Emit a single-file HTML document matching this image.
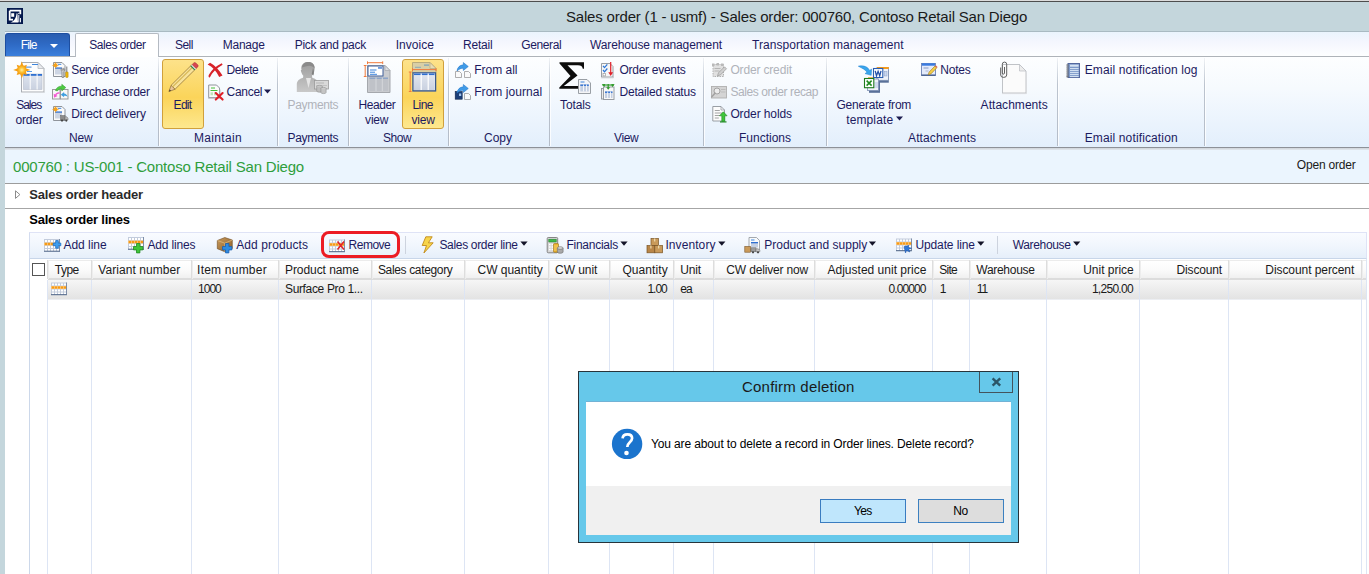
<!DOCTYPE html>
<html><head><meta charset="utf-8"><title>Sales order</title>
<style>
html,body{margin:0;padding:0}
body{width:1369px;height:574px;overflow:hidden;position:relative;background:#c4d6dc;font-family:"Liberation Sans",sans-serif;font-size:12px;line-height:14px}
div,span,svg{position:absolute;box-sizing:border-box}
.t{white-space:pre;font-size:12px;line-height:14px}
#texts,#dtexts{left:0;top:0;width:0;height:0}
#topline0{left:0;top:0;width:1369px;height:1px;background:#dcdcdc}
#topline1{left:0;top:1px;width:1369px;height:1px;background:#4e4e4e}
#titlebar{left:0;top:2px;width:1369px;height:30px;background:#c4d6dc}
#titleedge{left:5px;top:31px;width:1364px;height:1px;background:#a9bac2}
#tabrow{left:5px;top:32px;width:1364px;height:24px;background:linear-gradient(#eaf4fd,#f4f6fe 40%,#fdfeff)}
#tabline{left:5px;top:56px;width:1364px;height:1px;background:#aeb3b9}
#filetab{left:5px;top:33px;width:65px;height:23px;border-radius:3px 3px 0 0;border:1px solid #1d4ea0;border-bottom:none;background:linear-gradient(#2a5db0,#2f6bc6 50%,#3b7fdc)}
#filearrow{left:50px;top:44px;width:0;height:0;border-left:4px solid transparent;border-right:4px solid transparent;border-top:4px solid #fff}
#activetab{left:75px;top:33px;width:84px;height:24px;border:1px solid #b4bac2;border-bottom:none;border-radius:2px 2px 0 0;background:#fff}
#ribbon{left:5px;top:57px;width:1364px;height:90px;background:linear-gradient(#fdfeff,#f6fafe 35%,#eaf3fd 75%,#e3effc)}
#ribline1{left:5px;top:147px;width:1364px;height:1px;background:#8d9198}
#ribline2{left:5px;top:148px;width:1364px;height:2px;background:linear-gradient(#cfd3d9,#e2e8ef)}
#infobar{left:5px;top:150px;width:1364px;height:33px;background:#ebf5fe}
#infoline{left:5px;top:183px;width:1364px;height:1px;background:#9c9c9c}
#content{left:5px;top:184px;width:1364px;height:390px;background:#fff}
.gsep{top:58px;width:1px;height:88px;background:linear-gradient(rgba(190,198,210,.2),#bcc4cf 30%,#b4bcc8)}
.gsep2{top:58px;width:1px;height:88px;background:rgba(255,255,255,.8)}
.hl{border:1px solid #d0a03c;border-radius:3px;background:linear-gradient(#fde28a,#fbd763 45%,#fbd45a 55%,#fde88f)}
#hdrline{left:5px;top:208px;width:1364px;height:1px;background:#a6a6a6}
#toolbar{left:29px;top:232px;width:1338px;height:27px;border:1px solid #dfe3f6;border-bottom-color:#c8d6e9;border-left-color:#d3dcef;background:linear-gradient(#f9fbff,#f1f6fd 50%,#e6effa)}
.tsep{top:236px;width:1px;height:18px;background:#cdd3de}
#gridhdr{left:48px;top:260px;width:1318px;height:20px;background:linear-gradient(#ffffff,#fbfbfb 50%,#f0f0f0);border-bottom:2px solid #dcdcdc;border-top:1px solid #ececec}
#gridrow{left:48px;top:280px;width:1318px;height:20px;background:linear-gradient(#f6f6f6,#e3e3e3 95%,#eceef2 95%)}
.vl{top:280px;width:1px;height:294px;background:#dde5f4}
.vh{top:260px;width:2px;height:19px;background:linear-gradient(90deg,#dddddd 50%,#ededed 50%)}
#gridleft{left:29px;top:259px;width:1px;height:315px;background:#ccd8ea}
#gridright{left:1366px;top:259px;width:1px;height:315px;background:#dde5f4}
#chk{left:32px;top:263px;width:13px;height:13px;border:1px solid #555;background:#fff}
#remove{left:321px;top:231px;width:79px;height:27px;border:3px solid #ec1c24;border-radius:8px}
#dlg{left:578px;top:371px;width:441px;height:172px;background:#66c8ea;border:1px solid #27343b}
#dlgwhite{left:586px;top:402px;width:425px;height:84px;background:#fff}
#dlgedge{left:586px;top:401px;width:425px;height:1px;background:#72b2d5}
#dlggray{left:586px;top:486px;width:425px;height:49px;background:#f0f0f0}
#dlgclose{left:979px;top:372px;width:34px;height:21px;border:1px solid #44545c;border-top:none;background:#66c8ea}
.btn{top:499px;width:86px;height:24px;border:1px solid #3c80c0;background:#dddddd}
#yes{left:820px;border-color:#3a7cc0;background:#bfe6fc}
#no{left:918px}

</style></head>
<body>
<div id="topline0"></div><div id="topline1"></div>
<div id="titlebar"></div><div id="titleedge"></div>
<div id="tabrow"></div><div id="tabline"></div>
<div id="filetab"></div><div id="filearrow"></div>
<div id="activetab"></div>
<div id="ribbon"></div>
<div id="ribline1"></div><div id="ribline2"></div>
<div id="infobar"></div><div id="infoline"></div>
<div id="content"></div>
<div class="gsep" style="left:158px"></div><div class="gsep2" style="left:159px"></div><div class="gsep" style="left:277px"></div><div class="gsep2" style="left:278px"></div><div class="gsep" style="left:348px"></div><div class="gsep2" style="left:349px"></div><div class="gsep" style="left:448px"></div><div class="gsep2" style="left:449px"></div><div class="gsep" style="left:549px"></div><div class="gsep2" style="left:550px"></div><div class="gsep" style="left:703px"></div><div class="gsep2" style="left:704px"></div><div class="gsep" style="left:826px"></div><div class="gsep2" style="left:827px"></div><div class="gsep" style="left:1057px"></div><div class="gsep2" style="left:1058px"></div><div class="gsep" style="left:1204px"></div><div class="gsep2" style="left:1205px"></div>
<div class="hl" style="left:162px;top:59px;width:42px;height:70px"></div>
<div class="hl" style="left:402px;top:59px;width:42px;height:70px"></div>
<div id="hdrline"></div>
<div id="toolbar"></div>
<div id="gridhdr"></div>
<div id="gridrow"></div>
<div id="gridleft"></div><div id="gridright"></div>
<div class="vl" style="left:47px"></div><div class="vh" style="left:47px"></div><div class="vl" style="left:91px"></div><div class="vh" style="left:91px"></div><div class="vl" style="left:191px"></div><div class="vh" style="left:191px"></div><div class="vl" style="left:278px"></div><div class="vh" style="left:278px"></div><div class="vl" style="left:371px"></div><div class="vh" style="left:371px"></div><div class="vl" style="left:464px"></div><div class="vh" style="left:464px"></div><div class="vl" style="left:548px"></div><div class="vh" style="left:548px"></div><div class="vl" style="left:609px"></div><div class="vh" style="left:609px"></div><div class="vl" style="left:673px"></div><div class="vh" style="left:673px"></div><div class="vl" style="left:713px"></div><div class="vh" style="left:713px"></div><div class="vl" style="left:814px"></div><div class="vh" style="left:814px"></div><div class="vl" style="left:932px"></div><div class="vh" style="left:932px"></div><div class="vl" style="left:969px"></div><div class="vh" style="left:969px"></div><div class="vl" style="left:1046px"></div><div class="vh" style="left:1046px"></div><div class="vl" style="left:1139px"></div><div class="vh" style="left:1139px"></div><div class="vl" style="left:1228px"></div><div class="vh" style="left:1228px"></div><div class="vl" style="left:1361px"></div><div class="vh" style="left:1361px"></div>
<div id="chk"></div>
<div id="remove"></div>
<svg width="1369" height="20" viewBox="0 236 1369 20" style="left:0;top:236px"><path d="M520.4 241.5h7.2l-3.6 4.2z" fill="#141428"/><path d="M620.4 241.5h7.2l-3.6 4.2z" fill="#141428"/><path d="M718.2 241.5h7.2l-3.6 4.2z" fill="#141428"/><path d="M868.8 241.5h7.2l-3.6 4.2z" fill="#141428"/><path d="M977.2 241.5h7.2l-3.6 4.2z" fill="#141428"/><path d="M1073.1 241.5h7.2l-3.6 4.2z" fill="#141428"/></svg><div class="tsep" style="left:405px"></div><div class="tsep" style="left:997px"></div><svg id="ico" width="1369" height="574" viewBox="0 0 1369 574" style="left:0;top:0">
<defs>
<radialGradient id="sun"><stop offset="0" stop-color="#fff0a0"/><stop offset=".55" stop-color="#fdc030"/><stop offset="1" stop-color="#f59e14"/></radialGradient>
<linearGradient id="colg" x1="0" y1="0" x2="0" y2="1"><stop offset="0" stop-color="#dfe4ee"/><stop offset="1" stop-color="#c9d1e0"/></linearGradient>
<linearGradient id="blar" x1="0" y1="0" x2="1" y2="1"><stop offset="0" stop-color="#6fb6f0"/><stop offset="1" stop-color="#1f74c8"/></linearGradient>
<linearGradient id="pay" x1="0" y1="0" x2="0" y2="1"><stop offset="0" stop-color="#9c9c9c"/><stop offset="1" stop-color="#c9c9c9"/></linearGradient>
<linearGradient id="sig" x1="0" y1="0" x2="0" y2="1"><stop offset="0" stop-color="#3a3a3a"/><stop offset=".5" stop-color="#111"/><stop offset="1" stop-color="#000"/></linearGradient>
</defs>
<!-- app icon -->
<g>
<rect x="7" y="8" width="16" height="16" fill="#04194d"/>
<path d="M9.7 10.7h10.6v3.5M9.7 10.7v9h3.3" fill="none" stroke="#fff" stroke-width="1.8"/>
<rect x="11.2" y="13.2" width="3" height="3.6" fill="#fff"/>
<path d="M10 22.6c3.5-.8 6-4 6.6-9.4l.9.2c.1 4 .3 6.500.6 9.200z" fill="#fff"/>
<rect x="18.300" y="14.800" width="1" height="7.500" fill="#fff"/><rect x="20" y="18" width="1" height="4.300" fill="#e8ecf4"/>
<rect x="18.200" y="12.900" width="1" height="1" fill="#fff"/>
</g>
<!-- Sales order big icon -->
<g>
<path d="M21.500 62.500h16.500l6 6v23.500h-22.500z" fill="#fdfdfd" stroke="#a9adb3" stroke-width="1"/>
<path d="M21 92.500h23.500v-22" fill="none" stroke="#d5d8dc" stroke-width="1"/>
<path d="M38 62.500v6h6z" fill="#e9ebee" stroke="#b5b9bf" stroke-width=".8"/>
<rect x="23.500" y="74" width="18.500" height="15.500" fill="url(#colg)" stroke="#b7bfce" stroke-width=".6"/>
<rect x="23.500" y="74" width="18.500" height="1.800" fill="#2f6fd0"/>
<rect x="29.700" y="74" width="1" height="15.500" fill="#fff"/><rect x="36.600" y="74" width="1" height="15.500" fill="#fff"/>
<rect x="32" y="64" width="6" height="1" fill="#3f86dc"/><rect x="26" y="66.600" width="5.500" height="1" fill="#3f86dc"/><rect x="27" y="71" width="5" height="1" fill="#5a9be4"/>
<g transform="translate(21.800 69.900)">
<path d="M0.0 -8.6L1.6 -4.0L5.1 -5.1L4.0 -1.6L8.6 0.0L4.0 1.6L5.1 5.1L1.6 4.0L0.0 8.6L-1.6 4.0L-5.1 5.1L-4.0 1.6L-8.6 0.0L-4.0 -1.6L-5.1 -5.1L-1.6 -4.0z" fill="#f59e14"/><circle r="4.6" fill="url(#sun)"/>
</g>
</g>
<!-- Service order small icon -->
<g>
<path d="M53.500 62.500h8.500l3 3v11h-11.500z" fill="#fafafa" stroke="#8f949b"/>
<rect x="55" y="67.500" width="7" height="7" fill="#cdd5e3"/><rect x="55" y="67.500" width="7" height="1.200" fill="#2f6fd0"/>
<rect x="57.800" y="63.800" width="3.500" height="1" fill="#3f86dc"/>
<g transform="translate(55.500 65.300) scale(.46)"><path d="M0.0 -8.3L1.3 -3.1L4.5 -4.5L3.1 -1.3L8.3 0.0L3.1 1.3L4.5 4.5L1.3 3.1L0.0 8.3L-1.3 3.1L-4.5 4.5L-3.1 1.3L-8.3 0.0L-3.1 -1.3L-4.5 -4.5L-1.3 -3.1z" fill="#f5a21c"/></g>
<path d="M62.200 68.200c-1.500.6-1.500 2.500-.2 3.200v6h1.800v-6c1.300-.7 1.300-2.600-.2-3.200v2h-1.400z" fill="#e6e6e6" stroke="#6d6d6d" stroke-width=".7"/>
<rect x="66.300" y="66.500" width="1" height="6" fill="#777"/>
<rect x="65.700" y="72" width="2.400" height="5.400" rx=".6" fill="#f2b90c" stroke="#a87c00" stroke-width=".5"/>
</g>
<!-- Purchase order small icon -->
<g>
<rect x="52.500" y="89.500" width="7.500" height="9.500" fill="#f8f8f8" stroke="#9a9a9a"/>
<rect x="60.500" y="89.500" width="7.500" height="9.500" fill="#f8f8f8" stroke="#9a9a9a"/>
<path d="M55.500 90.500c.8-3 3.600-4.600 6.300-4.300v-1.900l4 3.300-4 3.300v-1.900c-1.800-.2-3.400.400-4.400 1.900z" fill="#4fcb43" stroke="#2f9a2a" stroke-width=".5"/>
<path d="M59.500 92.300c-2.200-.2-3.600.8-4.300 2.200l-1.500-.800.300 4 3.600-1.700-1.300-.7c.7-1.200 1.700-1.600 3.200-1.600z" fill="#f25ad2"/>
<path d="M67.600 96.800c-.4-2-1.800-3-3.500-3.200v-1.500l-3.300 2.600 3.300 2.600v-1.600c1.400 0 2.600.3 3.500 1.100z" fill="#3f9fe0"/>
</g>
<!-- Direct delivery small icon -->
<g>
<path d="M53.500 106.500h8.500l3 3v11h-11.500z" fill="#fafafa" stroke="#8f949b"/>
<rect x="55" y="111.500" width="7" height="7" fill="#cdd5e3"/><rect x="55" y="111.500" width="7" height="1.200" fill="#2f6fd0"/>
<rect x="57.800" y="107.800" width="3.500" height="1" fill="#3f86dc"/>
<g transform="translate(55.500 109.300) scale(.46)"><path d="M0.0 -8.3L1.3 -3.1L4.5 -4.5L3.1 -1.3L8.3 0.0L3.1 1.3L4.5 4.5L1.3 3.1L0.0 8.3L-1.3 3.1L-4.5 4.5L-3.1 1.3L-8.3 0.0L-3.1 -1.3L-4.5 -4.5L-1.3 -3.1z" fill="#f5a21c"/></g>
<rect x="60.500" y="115.500" width="4.500" height="4.500" fill="#8c8c8c" stroke="#666" stroke-width=".5"/>
<path d="M65 116.800h1.800l1.200 1.500v1.700h-3z" fill="#b9b9b9" stroke="#666" stroke-width=".5"/>
<circle cx="62" cy="120.600" r="1.100" fill="#444"/><circle cx="66.300" cy="120.600" r="1.100" fill="#444"/>
</g>
<!-- Edit pencil -->
<g>
<path d="M168.900 91.600l2.200-6.300 4 3.900z" fill="#e9c59a" stroke="#7a5c2a" stroke-width=".6"/>
<path d="M168.900 91.600l.8-2.200 1.400 1.400z" fill="#4a3a20"/>
<path d="M171.100 85.300l19.800-19.600 4 4-19.800 19.500z" fill="#f8e39c" stroke="#8a6a2a" stroke-width=".7"/>
<path d="M172.700 86.800l19.800-19.600" stroke="#d9b95a" stroke-width="1.200" fill="none"/>
<path d="M190.900 65.700l1.200-1.200 4 4-1.200 1.200z" fill="#f4f4f4" stroke="#8a8a8a" stroke-width=".4"/>
<path d="M190.300 66.300l.9-.9 4 4-.9.900z" fill="#2f8a4a"/>
<path d="M192.100 64.500l1.700-1.600c.7-.6 1.500-.5 2.100.1l1.800 1.800c.6.600.7 1.400.1 2.100l-1.700 1.600z" fill="#d8474f" stroke="#8d2a30" stroke-width=".4"/>
</g>
<!-- Delete X -->
<g fill="#d8232a">
<path d="M207.600 64.500c4.800 2.400 8.600 6.400 11.600 12.600l3.300-1.700c-3.400-5.600-7.600-9.800-12.400-12.600z"/>
<path d="M221.800 63.200c-5.600 2.500-10.300 6.400-12.900 11.600-.8 1.500-.3 2.800.9 2.600 2.400-5 6.800-9.300 12.800-12.700z"/>
</g>
<!-- Cancel icon -->
<g>
<path d="M208.700 85h7.800l3 3v9.700h-10.800z" fill="#fbfbfb" stroke="#8f949b"/>
<path d="M208.200 98.500h12v-9" fill="none" stroke="#c9ccd1"/>
<rect x="211" y="87.500" width="4" height="1" fill="#42c23a"/><rect x="210.500" y="90" width="7" height="1" fill="#42c23a"/><rect x="210.500" y="92.300" width="2.500" height="3" fill="#bfe6bb"/><rect x="214" y="92.300" width="2.500" height="3" fill="#bfe6bb"/>
<path d="M215.800 93l6.800 6.600M222.600 93l-6.800 6.600" stroke="#df1f27" stroke-width="2.100" stroke-linecap="round"/>
</g>
<path d="M264 89.500h7l-3.500 4z" fill="#1c1c50"/>
<!-- Payments (disabled) -->
<g>
<path d="M301.500 70c-1-5 2-8 6.500-8s7.500 3 6.500 8c-.3 2.500-1.300 4.500-2.500 5.800l.3 2c3 1 5.700 2.500 6.200 6v8.200h-21.700v-8.200c.5-3.500 3.200-5 6.200-6l.3-2c-1.200-1.300-2.200-3.300-2.500-5.800z" fill="url(#pay)"/>
<path d="M302 67.500c.5-3.500 3-5.500 6.500-5.500 3.800 0 6.200 2.500 6 6.500-1.500-2-4-3-6.500-2.500-2.500.5-4.500.8-6 1.500z" fill="#8a8a8a"/>
<path d="M313 68c1 2 1.300 5 .4 7.500l-1.700-1.500z" fill="#808080"/>
<path d="M306 78l2.500 10 2.500-10z" fill="#e5e5e5"/>
<rect x="314.500" y="80.500" width="14" height="8.500" fill="#d9d9d9" stroke="#9b9b9b" stroke-width=".8"/>
<rect x="316" y="82.500" width="8" height="1" fill="#b5b5b5"/><rect x="316" y="85" width="11" height="1" fill="#c2c2c2"/>
<ellipse cx="319.500" cy="86.500" rx="2.800" ry="1.200" fill="#cfcfcf" stroke="#8e8e8e" stroke-width=".6"/>
<path d="M316.700 86.500v4.500a2.800 1.200 0 0 0 5.600 0v-4.500" fill="#bdbdbd" stroke="#8e8e8e" stroke-width=".6"/>
<ellipse cx="323.500" cy="88.500" rx="2.600" ry="1.100" fill="#d5d5d5" stroke="#8e8e8e" stroke-width=".6"/>
<path d="M320.900 88.500v4a2.600 1.100 0 0 0 5.200 0v-4" fill="#c4c4c4" stroke="#8e8e8e" stroke-width=".6"/>
</g>
<!-- Header view -->
<g>
<path d="M367.500 65.500h17.500l5 5v22h-22.500z" fill="#c9cbcf" stroke="#a5a8ad"/>
<path d="M385 65.500v5h5z" fill="#dcdee1" stroke="#a5a8ad" stroke-width=".7"/>
<rect x="369.500" y="77.500" width="18.500" height="13.500" fill="#bfc2c8"/>
<rect x="369.500" y="77.500" width="18.500" height="1.500" fill="#8ea5c8"/>
<rect x="375.500" y="77.500" width="1" height="13.500" fill="#d5d7db"/><rect x="381.800" y="77.500" width="1" height="13.500" fill="#d5d7db"/>
<rect x="368" y="66" width="15" height="10" fill="#fff" stroke="#3f5f9a" stroke-width="1"/>
<rect x="378" y="67.300" width="4" height="1.300" fill="#2f6fd0"/>
<rect x="370" y="69.500" width="6.500" height="1" fill="#3f86dc"/><rect x="370" y="71.700" width="5" height="1" fill="#3f86dc"/><rect x="370" y="73.800" width="7" height="1" fill="#3f86dc"/>
<path d="M367.500 62.700h15.200M367.500 61.300v2.800M382.700 61.300v2.800M365.200 65.500v11M363.800 65.500h2.800M363.800 76.500h2.800" stroke="#f07a3c" stroke-width="1" fill="none"/>
</g>
<!-- Line view -->
<g>
<path d="M412.500 62.500h17.500l6 6v23h-23.500z" fill="#d9cfa6" stroke="#b9ab7c"/>
<path d="M430 62.500v6h6z" fill="#e6dcb6" stroke="#b9ab7c" stroke-width=".7"/>
<rect x="424" y="64.500" width="5" height="1.200" fill="#7aa0b8"/><rect x="415" y="66.800" width="6" height="1" fill="#8aa8b8"/>
<rect x="413" y="72.800" width="22.500" height="18" fill="#f3f6fb" stroke="#3b5a8c" stroke-width="1.200"/>
<rect x="414" y="73.500" width="20.500" height="1.800" fill="#2f6fd0"/>
<rect x="414" y="75.300" width="20.500" height="14.700" fill="url(#colg)"/>
<rect x="420.600" y="73.500" width="1.200" height="16.500" fill="#fff"/><rect x="427.600" y="73.500" width="1.200" height="16.500" fill="#fff"/>
<path d="M412.500 69.600h23.500M412.500 68.200v2.800M436 68.200v2.800M410.200 72v19.500M408.800 72h2.800M408.800 91.500h2.800" stroke="#f07a3c" stroke-width="1" fill="none"/>
</g>
</svg>
<svg id="ico2" width="1369" height="574" viewBox="0 0 1369 574" style="left:0;top:0">
<!-- From all -->
<g>
<path d="M455.500 71.500h4l2 2v4h-6z" fill="#fafafa" stroke="#9a9a9a" stroke-width=".8"/>
<path d="M464.500 71.500h4l2 2v4h-6z" fill="#fafafa" stroke="#9a9a9a" stroke-width=".8"/>
<path d="M457 71c.3-3.600 3-6 6.300-6.200v-2.300l5 4-5 4v-2.300c-2.300 0-4.300.900-6.300 2.800z" fill="#3f9be8" stroke="#1f6fc0" stroke-width=".5"/>
</g>
<!-- From journal -->
<g>
<rect x="455.200" y="91.500" width="7" height="7.700" fill="#1c3f78" stroke="#0f2448" stroke-width=".6"/>
<rect x="459" y="93.500" width="2.200" height="2.500" fill="#9fc0e8"/>
<path d="M464.500 93.500h4l2 2v4h-6z" fill="#fafafa" stroke="#9a9a9a" stroke-width=".8"/>
<path d="M457 93c.3-3.600 3-6 6.300-6.200v-2.300l5 4-5 4v-2.300c-2.300 0-4.300.900-6.300 2.800z" fill="#3f9be8" stroke="#1f6fc0" stroke-width=".5"/>
</g>
<!-- Totals sigma -->
<g>
<path d="M559.5 62.2H584V68.8H582.8C582.3 66.2 581 65.2 578 65.2H567.5L577.5 75.6L563.8 86H579C582 86 583.6 84.6 584.3 81.5H585.5L584.5 88.8H559.3V87.6L570.5 76L559.5 63.4Z" fill="#0c0c0c"/>
<path d="M578.500 79.500h8.500l3.500 3.500v10.500h-12z" fill="#f4f5f7" stroke="#8f949b" stroke-width=".9"/>
<rect x="580.300" y="84.500" width="8.500" height="7" fill="#c5d0e2"/><rect x="580.300" y="84.500" width="8.500" height="1.400" fill="#2f6fd0"/>
<rect x="583" y="84.500" width=".8" height="7" fill="#fff"/><rect x="586" y="84.500" width=".8" height="7" fill="#fff"/>
<rect x="580.500" y="81.500" width="4" height="1" fill="#3f86dc"/>
</g>
<!-- Order events -->
<g>
<path d="M601.500 63.500h8.500l3 3v10.500h-11.500z" fill="#f7f7f7" stroke="#8f949b" stroke-width=".9"/>
<path d="M601 77.800h12.500v-9" fill="none" stroke="#c9ccd1"/>
<path d="M603 65.800l1.500 1.800 2.800-3.300M603 70l1.500 1.800 2.800-3.300" stroke="#2f78d8" stroke-width="1.300" fill="none"/>
<rect x="603" y="73.300" width="2.600" height="2.600" fill="#fff" stroke="#8a8a8a" stroke-width=".6"/>
<path d="M610.700 62v11" stroke="#e0202a" stroke-width="1.200"/>
<path d="M608.300 72.300h4.800l-2.400 3.600z" fill="#e0202a"/>
</g>
<!-- Detailed status -->
<g>
<rect x="601.500" y="88.500" width="10" height="10.500" fill="#ececec" stroke="#8f949b" stroke-width=".9"/>
<rect x="603.500" y="87" width="10.500" height="12.500" fill="#f8f8f8" stroke="#8f949b" stroke-width=".9"/>
<rect x="605" y="91.500" width="7.500" height="6.500" fill="#c5d0e2"/><rect x="605" y="91.500" width="7.500" height="1.400" fill="#2f6fd0"/>
<rect x="607.300" y="91.500" width=".8" height="6.500" fill="#fff"/><rect x="610" y="91.500" width=".8" height="6.500" fill="#fff"/>
<path d="M602.500 85h11.500" stroke="#2f9a2a" stroke-width="1.200"/>
<path d="M601.800 84.300l2.600 3 .8-3.400zM614.700 84.300l-2.600 3-.8-3.400z" fill="#2f9a2a"/>
<path d="M608.200 84v4" stroke="#2f9a2a" stroke-width="1.200"/><path d="M606.200 87.200h4l-2 2.500z" fill="#2f9a2a"/>
</g>
<!-- Order credit (disabled) -->
<g>
<path d="M713 64.500h10.500v12h-10.500z" fill="#e0e0e0" stroke="#a9a9a9" stroke-width=".9" stroke-dasharray="1.500 1"/>
<path d="M712 63.500h2.500v2.500h-2.500zM716.500 63h2.500v2.500h-2.500zM721 63.500h2.500v2.500h-2.500z" fill="#b9b9b9"/>
<rect x="714.500" y="68" width="6" height="1" fill="#b5b5b5"/><rect x="714.500" y="70.500" width="5" height="1" fill="#b5b5b5"/>
<path d="M717.500 75.800l1-3 6-6 2 2-6 6z" fill="#cfcfcf" stroke="#9a9a9a" stroke-width=".7"/>
</g>
<!-- Sales order recap (disabled) -->
<g>
<rect x="711.500" y="86.500" width="15" height="11.500" fill="#d4d4d4" stroke="#b0b0b0" stroke-width=".9"/>
<rect x="721" y="89" width="4.500" height="1" fill="#bcbcbc"/><rect x="721" y="91.500" width="4.500" height="1" fill="#bcbcbc"/>
<circle cx="717" cy="91" r="3" fill="#ececec" stroke="#a3a3a3" stroke-width="1"/>
<path d="M715 93.200l-3.200 3.600" stroke="#a3a3a3" stroke-width="1.600" stroke-linecap="round"/>
</g>
<!-- Order holds -->
<g>
<path d="M712.800 106.500h8.200l3.500 3.500v11h-11.700z" fill="#fcfcfc" stroke="#8f949b" stroke-width=".9"/>
<path d="M721 106.500v3.500h3.500" fill="none" stroke="#8f949b" stroke-width=".7"/>
<path d="M714.800 110.500h5M714.800 113h7.500M714.800 115.500h5M714.800 118h4" stroke="#9a9a9a" stroke-width=".9"/>
<path d="M723.300 111.800l3.800 4h-2.300v5.500h-3v-5.500h-2.300z" fill="#3fc63a" stroke="#1f8a20" stroke-width=".6"/>
<rect x="720" y="121.300" width="6.500" height="1.200" fill="#1f8a20"/>
</g>
<!-- Generate from template -->
<g>
<path d="M858.300 66.200c5.500-1.200 9.800.800 11.300 4.300l2-1.400-.4 6.200-6.200-1.700 2-1.300c-1.300-2.600-4.400-3.700-8.700-6.100z" fill="#3aa6ec" stroke="#1f7fd0" stroke-width=".5"/>
<rect x="879" y="69.500" width="9.800" height="13.200" fill="#5a7199"/>
<rect x="877" y="67.500" width="11.500" height="12.800" fill="#eef2f9" stroke="#7d90b3" stroke-width=".8"/>
<rect x="877" y="67" width="11.800" height="2" fill="#f39a1e"/>
<rect x="884.500" y="71.500" width="2.500" height="4.500" fill="#c9d6ee" stroke="#8aa0cc" stroke-width=".5"/>
<rect x="873.500" y="68.500" width="9.300" height="9" fill="#fff" stroke="#2a5db0" stroke-width="1.100"/>
<path d="M875.200 70.800l1.300 5 1.600-4.400 1.600 4.400 1.300-5" fill="none" stroke="#2450a8" stroke-width="1.300"/>
<rect x="869" y="81" width="11" height="11.800" fill="#5a7199"/>
<rect x="867.500" y="79" width="11" height="11.500" fill="#eef2f9" stroke="#7d90b3" stroke-width=".8"/>
<rect x="868" y="77.300" width="5" height="1.500" fill="#f39a1e"/>
<path d="M874.500 83h3.500M874.500 85h3.500M874.500 87h3.500" stroke="#a9bcdf" stroke-width=".9"/>
<rect x="864.500" y="78.500" width="9.300" height="9.200" fill="#fff" stroke="#1e7a1e" stroke-width="1.100"/>
<path d="M866.600 80.600l5 5M871.600 80.600l-5 5" stroke="#1e8a1e" stroke-width="1.500"/>
</g>
<path d="M896 116.500h7l-3.500 4z" fill="#1c1c50"/>
<!-- Notes -->
<g>
<rect x="921.500" y="63.500" width="14" height="12" fill="#e3eafb" stroke="#6d83b5" stroke-width=".9"/>
<rect x="921.500" y="74.500" width="14" height="1.200" fill="#3d5584"/>
<rect x="922" y="63.300" width="13" height="2.400" fill="#3a7be0"/>
<rect x="923.500" y="67.500" width="5" height="1" fill="#8a9ac0"/><rect x="925.500" y="70.500" width="3" height="1" fill="#a9b6d6"/>
<path d="M928.200 74.800l.9-2.700 5.800-6 1.800 1.800-5.800 6z" fill="#f5cf4a" stroke="#9a7620" stroke-width=".6"/>
<path d="M934.900 66.100l.9-.9 1.800 1.800-.9.900z" fill="#d86a5a"/>
</g>
<!-- Attachments -->
<g>
<path d="M1002.500 64.500h17l6.500 6.500v22h-23.500z" fill="#fbfbfb" stroke="#b9bcc1" stroke-width=".9"/>
<path d="M1002 93.600h24.500v-21" fill="none" stroke="#d9dbde"/>
<path d="M1019.500 64.500v6.500h6.500z" fill="#ededed" stroke="#b9bcc1" stroke-width=".7"/>
<path d="M1000.7 67.5V75a3 2.4 0 0 0 6 0V64.3a2.2 2.2 0 0 0-4.4 0V73a1.1 1.1 0 0 0 2.2 0V67" fill="none" stroke="#505050" stroke-width=".9"/>
</g>
<!-- Email notification log -->
<g>
<rect x="1068" y="63.5" width="11.5" height="14" fill="#7c99c9" stroke="#54689e" stroke-width="1"/>
<rect x="1070" y="64.7" width="8.6" height="2" fill="#d6e3f3"/>
<rect x="1070" y="68.1" width="8.6" height="1" fill="#dbe7f5"/><rect x="1070" y="70.1" width="8.6" height="1" fill="#dbe7f5"/><rect x="1070" y="72.1" width="8.6" height="1" fill="#dbe7f5"/><rect x="1070" y="74.1" width="8.6" height="1" fill="#dbe7f5"/><rect x="1070" y="76.1" width="8.6" height="1" fill="#dbe7f5"/>
<rect x="1066.2" y="64.6" width="2.6" height="1" rx=".5" fill="#6b6b6b"/><rect x="1066.2" y="66.6" width="2.6" height="1" rx=".5" fill="#6b6b6b"/><rect x="1066.2" y="68.6" width="2.6" height="1" rx=".5" fill="#6b6b6b"/><rect x="1066.2" y="70.6" width="2.6" height="1" rx=".5" fill="#6b6b6b"/><rect x="1066.2" y="72.6" width="2.6" height="1" rx=".5" fill="#6b6b6b"/><rect x="1066.2" y="74.6" width="2.6" height="1" rx=".5" fill="#6b6b6b"/><rect x="1066.2" y="76.2" width="2.6" height="1" rx=".5" fill="#6b6b6b"/>
</g>
</svg>
<svg id="ico3" width="1369" height="574" viewBox="0 0 1369 574" style="left:0;top:0">
<defs>

<linearGradient id="box" x1="0" y1="0" x2="1" y2="1"><stop offset="0" stop-color="#c99a5a"/><stop offset="1" stop-color="#8a5f2c"/></linearGradient>
</defs>
<!-- header expand triangle -->
<path d="M15.500 190.800v7.600l4.400-3.800z" fill="#fff" stroke="#8a8a8a" stroke-width="1"/>
<!-- Add line -->
<g transform="translate(44 239)"><rect x="0" y="0" width="16" height="12.500" fill="#c3ccdc"/><rect x="0" y="3.500" width="16" height="3" fill="#f8c070"/><rect x="1" y="1" width="2" height="2" fill="#fff"/><rect x="4" y="1" width="2" height="2" fill="#fff"/><rect x="7" y="1" width="2" height="2" fill="#fff"/><rect x="10" y="1" width="2" height="2" fill="#fff"/><rect x="13" y="1" width="2" height="2" fill="#fff"/><rect x="1" y="4" width="2" height="2" fill="#f59a16"/><rect x="4" y="4" width="2" height="2" fill="#f59a16"/><rect x="7" y="4" width="2" height="2" fill="#f59a16"/><rect x="10" y="4" width="2" height="2" fill="#f59a16"/><rect x="13" y="4" width="2" height="2" fill="#f59a16"/><rect x="1" y="7" width="2" height="2" fill="#fff"/><rect x="4" y="7" width="2" height="2" fill="#fff"/><rect x="7" y="7" width="2" height="2" fill="#fff"/><rect x="10" y="7" width="2" height="2" fill="#fff"/><rect x="13" y="7" width="2" height="2" fill="#fff"/><rect x="1" y="10" width="2" height="2" fill="#fff"/><rect x="4" y="10" width="2" height="2" fill="#fff"/><rect x="7" y="10" width="2" height="2" fill="#fff"/><rect x="10" y="10" width="2" height="2" fill="#fff"/><rect x="13" y="10" width="2" height="2" fill="#fff"/><rect x="0" y="11.700" width="16" height="1" fill="#4d6386"/><rect x="15.200" y="0" width=".8" height="12.500" fill="#6d7f9c"/></g>
<g transform="translate(-.8 -.9)"><path d="M56.500 241.500h2.600v2.500h2.500v2.600h-2.500v2.500h-2.600v-2.500h-2.500v-2.600h2.500z" fill="#3f9fee" stroke="#1a6fc8" stroke-width=".8"/></g>
<!-- Add lines -->
<g transform="translate(128 237)"><rect x="0" y="0" width="16" height="12.500" fill="#c3ccdc"/><rect x="0" y="3.500" width="16" height="3" fill="#f8c070"/><rect x="1" y="1" width="2" height="2" fill="#fff"/><rect x="4" y="1" width="2" height="2" fill="#fff"/><rect x="7" y="1" width="2" height="2" fill="#fff"/><rect x="10" y="1" width="2" height="2" fill="#fff"/><rect x="13" y="1" width="2" height="2" fill="#fff"/><rect x="1" y="4" width="2" height="2" fill="#f59a16"/><rect x="4" y="4" width="2" height="2" fill="#f59a16"/><rect x="7" y="4" width="2" height="2" fill="#f59a16"/><rect x="10" y="4" width="2" height="2" fill="#f59a16"/><rect x="13" y="4" width="2" height="2" fill="#f59a16"/><rect x="1" y="7" width="2" height="2" fill="#fff"/><rect x="4" y="7" width="2" height="2" fill="#fff"/><rect x="7" y="7" width="2" height="2" fill="#fff"/><rect x="10" y="7" width="2" height="2" fill="#fff"/><rect x="13" y="7" width="2" height="2" fill="#fff"/><rect x="1" y="10" width="2" height="2" fill="#fff"/><rect x="4" y="10" width="2" height="2" fill="#fff"/><rect x="7" y="10" width="2" height="2" fill="#fff"/><rect x="10" y="10" width="2" height="2" fill="#fff"/><rect x="13" y="10" width="2" height="2" fill="#fff"/><rect x="0" y="11.700" width="16" height="1" fill="#4d6386"/><rect x="15.200" y="0" width=".8" height="12.500" fill="#6d7f9c"/></g>
<path d="M136.500 243.500h3.400v3h3v3.400h-3v3h-3.400v-3h-3v-3.400h3z" fill="#3fc63a" stroke="#1f8a20" stroke-width=".8"/>
<!-- Add products -->
<g>
<path d="M217.300 240.500l7.500-3 7.500 2.500v8.500l-7.500 3.200-7.500-3z" fill="url(#box)" stroke="#6e4a20" stroke-width=".6"/>
<path d="M217.300 240.500l7.500 2.700 7.500-3.200M224.800 243.200v8.500" fill="none" stroke="#e0bd85" stroke-width=".7"/>
<path d="M225.500 243.500h3.400v3h3v3.400h-3v3h-3.400v-3h-3v-3.400h3z" fill="#2f8be0" stroke="#1a5fb0" stroke-width=".8"/>
</g>
<!-- Remove -->
<g transform="translate(329 239.500)"><rect x="0" y="0" width="16" height="12.500" fill="#c3ccdc"/><rect x="0" y="3.500" width="16" height="3" fill="#f8c070"/><rect x="1" y="1" width="2" height="2" fill="#fff"/><rect x="4" y="1" width="2" height="2" fill="#fff"/><rect x="7" y="1" width="2" height="2" fill="#fff"/><rect x="10" y="1" width="2" height="2" fill="#fff"/><rect x="13" y="1" width="2" height="2" fill="#fff"/><rect x="1" y="4" width="2" height="2" fill="#f59a16"/><rect x="4" y="4" width="2" height="2" fill="#f59a16"/><rect x="7" y="4" width="2" height="2" fill="#f59a16"/><rect x="10" y="4" width="2" height="2" fill="#f59a16"/><rect x="13" y="4" width="2" height="2" fill="#f59a16"/><rect x="1" y="7" width="2" height="2" fill="#fff"/><rect x="4" y="7" width="2" height="2" fill="#fff"/><rect x="7" y="7" width="2" height="2" fill="#fff"/><rect x="10" y="7" width="2" height="2" fill="#fff"/><rect x="13" y="7" width="2" height="2" fill="#fff"/><rect x="1" y="10" width="2" height="2" fill="#fff"/><rect x="4" y="10" width="2" height="2" fill="#fff"/><rect x="7" y="10" width="2" height="2" fill="#fff"/><rect x="10" y="10" width="2" height="2" fill="#fff"/><rect x="13" y="10" width="2" height="2" fill="#fff"/><rect x="0" y="11.700" width="16" height="1" fill="#4d6386"/><rect x="15.200" y="0" width=".8" height="12.500" fill="#6d7f9c"/></g>
<path d="M337.500 241.500l6.500 8M344 241.500l-6.500 8" stroke="#e0242c" stroke-width="1.600"/>
<!-- Lightning -->
<path d="M425.800 236.800h6.400l-3.800 6h4.800l-9.300 10.200 2.600-7.500h-4.300z" fill="#f7d44a" stroke="#c28a1a" stroke-width=".9" stroke-linejoin="round"/>
<!-- Financials -->
<g>
<rect x="547.2" y="237.5" width="10.5" height="15.3" rx="1" fill="#d6d6d6" stroke="#7a7a7a" stroke-width=".9"/>
<rect x="548.8" y="239.2" width="7.4" height="2.8" fill="#3fb84a" stroke="#1f7a2a" stroke-width=".5"/>
<path d="M549 244.500h1.600M551.600 244.500h1.600M549 247h1.600M551.600 247h1.600M549 249.500h1.600M551.600 249.500h1.600" stroke="#fff" stroke-width="1.500"/>
<rect x="553.500" y="243.500" width="5" height="8.800" rx="1" fill="#e8b02a" stroke="#9a6f10" stroke-width=".6"/>
<path d="M553.800 246h4.400M553.800 248h4.400M553.800 250h4.400" stroke="#fbe08a" stroke-width=".7"/>
<path d="M557.300 248v4a2.900 1.300 0 0 0 5.800 0v-4" fill="#a9a9a9" stroke="#6a6a6a" stroke-width=".6"/>
<ellipse cx="560.200" cy="248" rx="2.900" ry="1.300" fill="#d9d9d9" stroke="#6a6a6a" stroke-width=".6"/>
</g>
<!-- Inventory -->
<g>
<rect x="651" y="238.500" width="7.500" height="7" fill="#c99a5a" stroke="#7a5424" stroke-width=".7"/>
<rect x="647" y="245.500" width="7.800" height="7.300" fill="#b98648" stroke="#7a5424" stroke-width=".7"/>
<rect x="654.800" y="245.500" width="7.800" height="7.300" fill="#c99a5a" stroke="#7a5424" stroke-width=".7"/>
<path d="M654.700 238.500v3M650.900 245.500v3M658.700 245.500v3" stroke="#f0dcb0" stroke-width="1.200"/>
</g>
<!-- Product and supply -->
<g>
<path d="M749 237.500h7.500l3 3v9.500h-10.500z" fill="#f8fafc" stroke="#8f949b" stroke-width=".8"/>
<rect x="751" y="242" width="7" height="5.500" fill="#c5d0e2"/><rect x="751" y="242" width="7" height="1.300" fill="#2f6fd0"/>
<rect x="751" y="239.500" width="3.500" height="1" fill="#3f86dc"/>
<rect x="744.800" y="246.500" width="5.700" height="5.700" fill="#c99a5a" stroke="#7a5424" stroke-width=".6"/>
<rect x="751" y="247.800" width="5" height="4" fill="#9a9a9a" stroke="#666" stroke-width=".5"/>
<path d="M756 248.800h2.300l1.500 1.500v1.500h-3.800z" fill="#c4c4c4" stroke="#666" stroke-width=".5"/>
<circle cx="753" cy="252.300" r="1.100" fill="#444"/><circle cx="758" cy="252.300" r="1.100" fill="#444"/>
</g>
<!-- Update line -->
<g transform="translate(896 238.500)"><rect x="0" y="0" width="16" height="12.500" fill="#c3ccdc"/><rect x="0" y="3.500" width="16" height="3" fill="#f8c070"/><rect x="1" y="1" width="2" height="2" fill="#fff"/><rect x="4" y="1" width="2" height="2" fill="#fff"/><rect x="7" y="1" width="2" height="2" fill="#fff"/><rect x="10" y="1" width="2" height="2" fill="#fff"/><rect x="13" y="1" width="2" height="2" fill="#fff"/><rect x="1" y="4" width="2" height="2" fill="#f59a16"/><rect x="4" y="4" width="2" height="2" fill="#f59a16"/><rect x="7" y="4" width="2" height="2" fill="#f59a16"/><rect x="10" y="4" width="2" height="2" fill="#f59a16"/><rect x="13" y="4" width="2" height="2" fill="#f59a16"/><rect x="1" y="7" width="2" height="2" fill="#fff"/><rect x="4" y="7" width="2" height="2" fill="#fff"/><rect x="7" y="7" width="2" height="2" fill="#fff"/><rect x="10" y="7" width="2" height="2" fill="#fff"/><rect x="13" y="7" width="2" height="2" fill="#fff"/><rect x="1" y="10" width="2" height="2" fill="#fff"/><rect x="4" y="10" width="2" height="2" fill="#fff"/><rect x="7" y="10" width="2" height="2" fill="#fff"/><rect x="10" y="10" width="2" height="2" fill="#fff"/><rect x="13" y="10" width="2" height="2" fill="#fff"/><rect x="0" y="11.700" width="16" height="1" fill="#4d6386"/><rect x="15.200" y="0" width=".8" height="12.500" fill="#6d7f9c"/></g>
<path d="M904 246.500l5-1-1 1.800 3.500 1-3 1.200 1.500 2.500-3.500-1.500-1 2.500z" fill="#2f78d8" stroke="#1a4fa0" stroke-width=".5"/>
<!-- Row type icon -->
<g transform="translate(51 282.500)"><rect x="0" y="0" width="16" height="12.500" fill="#c3ccdc"/><rect x="0" y="3.500" width="16" height="3" fill="#f8c070"/><rect x="1" y="1" width="2" height="2" fill="#fff"/><rect x="4" y="1" width="2" height="2" fill="#fff"/><rect x="7" y="1" width="2" height="2" fill="#fff"/><rect x="10" y="1" width="2" height="2" fill="#fff"/><rect x="13" y="1" width="2" height="2" fill="#fff"/><rect x="1" y="4" width="2" height="2" fill="#f59a16"/><rect x="4" y="4" width="2" height="2" fill="#f59a16"/><rect x="7" y="4" width="2" height="2" fill="#f59a16"/><rect x="10" y="4" width="2" height="2" fill="#f59a16"/><rect x="13" y="4" width="2" height="2" fill="#f59a16"/><rect x="1" y="7" width="2" height="2" fill="#fff"/><rect x="4" y="7" width="2" height="2" fill="#fff"/><rect x="7" y="7" width="2" height="2" fill="#fff"/><rect x="10" y="7" width="2" height="2" fill="#fff"/><rect x="13" y="7" width="2" height="2" fill="#fff"/><rect x="1" y="10" width="2" height="2" fill="#fff"/><rect x="4" y="10" width="2" height="2" fill="#fff"/><rect x="7" y="10" width="2" height="2" fill="#fff"/><rect x="10" y="10" width="2" height="2" fill="#fff"/><rect x="13" y="10" width="2" height="2" fill="#fff"/><rect x="0" y="11.700" width="16" height="1" fill="#4d6386"/><rect x="15.200" y="0" width=".8" height="12.500" fill="#6d7f9c"/></g>
</svg>


<div id="texts">
<span class="t" style="left:566.0px;top:7.8px;font-size:15px;line-height:18px;color:#1a1a1a;letter-spacing:-0.19px">Sales order (1 - usmf) - Sales order: 000760, Contoso Retail San Diego</span>
<span class="t" style="left:20.7px;top:37.8px;color:#ffffff;letter-spacing:-0.89px">File</span>
<span class="t" style="left:89.3px;top:37.8px;color:#1c1a60;letter-spacing:-0.47px">Sales order</span>
<span class="t" style="left:175.0px;top:37.8px;color:#1c1a60;letter-spacing:-0.55px">Sell</span>
<span class="t" style="left:222.7px;top:37.8px;color:#1c1a60;letter-spacing:-0.22px">Manage</span>
<span class="t" style="left:294.7px;top:37.8px;color:#1c1a60;letter-spacing:-0.26px">Pick and pack</span>
<span class="t" style="left:395.7px;top:37.8px;color:#1c1a60;letter-spacing:0.04px">Invoice</span>
<span class="t" style="left:463.1px;top:37.8px;color:#1c1a60;letter-spacing:-0.24px">Retail</span>
<span class="t" style="left:521.3px;top:37.8px;color:#1c1a60;letter-spacing:-0.39px">General</span>
<span class="t" style="left:590.0px;top:37.8px;color:#1c1a60;letter-spacing:-0.12px">Warehouse management</span>
<span class="t" style="left:752.0px;top:37.8px;color:#1c1a60;letter-spacing:0.05px">Transportation management</span>
<span class="t" style="left:16.2px;top:97.6px;color:#1c1a60;letter-spacing:-1.00px">Sales</span>
<span class="t" style="left:15.4px;top:112.8px;color:#1c1a60;letter-spacing:-0.15px">order</span>
<span class="t" style="left:71.2px;top:62.8px;color:#1c1a60;letter-spacing:-0.30px">Service order</span>
<span class="t" style="left:71.2px;top:84.8px;color:#1c1a60;letter-spacing:-0.25px">Purchase order</span>
<span class="t" style="left:71.2px;top:106.8px;color:#1c1a60;letter-spacing:-0.09px">Direct delivery</span>
<span class="t" style="left:69.0px;top:130.5px;color:#1c1a60;letter-spacing:-0.17px">New</span>
<span class="t" style="left:173.6px;top:97.5px;color:#1c1a60;letter-spacing:-0.71px">Edit</span>
<span class="t" style="left:226.6px;top:62.8px;color:#1c1a60;letter-spacing:-0.52px">Delete</span>
<span class="t" style="left:226.6px;top:84.8px;color:#1c1a60;letter-spacing:-0.30px">Cancel</span>
<span class="t" style="left:194.0px;top:130.5px;color:#1c1a60;letter-spacing:0.33px">Maintain</span>
<span class="t" style="left:287.5px;top:130.5px;color:#1c1a60;letter-spacing:-0.32px">Payments</span>
<span class="t" style="left:358.5px;top:97.5px;color:#1c1a60;letter-spacing:-0.41px">Header</span>
<span class="t" style="left:365.1px;top:112.8px;color:#1c1a60;letter-spacing:-0.21px">view</span>
<span class="t" style="left:412.5px;top:97.5px;color:#1c1a60;letter-spacing:-0.57px">Line</span>
<span class="t" style="left:411.5px;top:112.8px;color:#1c1a60;letter-spacing:-0.21px">view</span>
<span class="t" style="left:383.0px;top:130.5px;color:#1c1a60;letter-spacing:-0.45px">Show</span>
<span class="t" style="left:474.2px;top:62.8px;color:#1c1a60;letter-spacing:-0.01px">From all</span>
<span class="t" style="left:474.2px;top:84.8px;color:#1c1a60;letter-spacing:0.06px">From journal</span>
<span class="t" style="left:484.0px;top:130.5px;color:#1c1a60;letter-spacing:-0.00px">Copy</span>
<span class="t" style="left:560.0px;top:97.5px;color:#1c1a60;letter-spacing:-0.11px">Totals</span>
<span class="t" style="left:619.5px;top:62.8px;color:#1c1a60;letter-spacing:-0.28px">Order events</span>
<span class="t" style="left:619.5px;top:84.8px;color:#1c1a60;letter-spacing:-0.21px">Detailed status</span>
<span class="t" style="left:614.0px;top:130.5px;color:#1c1a60;letter-spacing:-0.38px">View</span>
<span class="t" style="left:730.4px;top:106.8px;color:#1c1a60;letter-spacing:-0.10px">Order holds</span>
<span class="t" style="left:739.0px;top:130.5px;color:#1c1a60;letter-spacing:-0.00px">Functions</span>
<span class="t" style="left:836.4px;top:97.5px;color:#1c1a60;letter-spacing:-0.20px">Generate from</span>
<span class="t" style="left:846.2px;top:112.8px;color:#1c1a60;letter-spacing:0.12px">template</span>
<span class="t" style="left:940.2px;top:62.8px;color:#1c1a60;letter-spacing:-0.19px">Notes</span>
<span class="t" style="left:980.6px;top:97.5px;color:#1c1a60;letter-spacing:0.04px">Attachments</span>
<span class="t" style="left:908.0px;top:130.5px;color:#1c1a60;letter-spacing:0.13px">Attachments</span>
<span class="t" style="left:1084.7px;top:62.8px;color:#1c1a60;letter-spacing:0.13px">Email notification log</span>
<span class="t" style="left:1084.7px;top:130.5px;color:#1c1a60;letter-spacing:0.13px">Email notification</span>
<span class="t" style="left:287.5px;top:97.5px;color:#b0b3ba;letter-spacing:-0.32px">Payments</span>
<span class="t" style="left:730.4px;top:62.8px;color:#b0b3ba;letter-spacing:-0.16px">Order credit</span>
<span class="t" style="left:730.4px;top:84.8px;color:#b0b3ba;letter-spacing:-0.42px">Sales order recap</span>
<span class="t" style="left:13.0px;top:157.8px;font-size:15px;line-height:18px;color:#2f9e3c;letter-spacing:-0.20px">000760 : US-001 - Contoso Retail San Diego</span>
<span class="t" style="left:1296.8px;top:158.0px;color:#1a1a1a;letter-spacing:-0.19px">Open order</span>
<span class="t" style="left:29.2px;top:187.1px;font-size:13px;line-height:16px;font-weight:700;color:#2a2a2a;letter-spacing:-0.19px">Sales order header</span>
<span class="t" style="left:29.2px;top:211.9px;font-size:13px;line-height:16px;font-weight:700;color:#000;letter-spacing:-0.20px">Sales order lines</span>
<span class="t" style="left:63.4px;top:237.5px;color:#1c1a60;letter-spacing:-0.01px">Add line</span>
<span class="t" style="left:147.4px;top:237.5px;color:#1c1a60;letter-spacing:-0.15px">Add lines</span>
<span class="t" style="left:236.2px;top:237.5px;color:#1c1a60;letter-spacing:0.10px">Add products</span>
<span class="t" style="left:348.6px;top:237.5px;color:#1c1a60;letter-spacing:-0.50px">Remove</span>
<span class="t" style="left:439.4px;top:237.5px;color:#1c1a60;letter-spacing:-0.32px">Sales order line</span>
<span class="t" style="left:566.4px;top:237.5px;color:#1c1a60;letter-spacing:-0.25px">Financials</span>
<span class="t" style="left:665.4px;top:237.5px;color:#1c1a60;letter-spacing:0.09px">Inventory</span>
<span class="t" style="left:764.2px;top:237.5px;color:#1c1a60;letter-spacing:0.02px">Product and supply</span>
<span class="t" style="left:915.4px;top:237.5px;color:#1c1a60;letter-spacing:-0.11px">Update line</span>
<span class="t" style="left:1012.7px;top:237.5px;color:#1c1a60;letter-spacing:-0.33px">Warehouse</span>
<span class="t" style="left:54.8px;top:262.8px;color:#1a1a1a;letter-spacing:-0.51px">Type</span>
<span class="t" style="left:98.3px;top:262.8px;color:#1a1a1a;letter-spacing:0.06px">Variant number</span>
<span class="t" style="left:197.1px;top:262.8px;color:#1a1a1a;letter-spacing:0.22px">Item number</span>
<span class="t" style="left:285.0px;top:262.8px;color:#1a1a1a;letter-spacing:-0.07px">Product name</span>
<span class="t" style="left:377.9px;top:262.8px;color:#1a1a1a;letter-spacing:-0.34px">Sales category</span>
<span class="t" style="left:477.5px;top:262.8px;color:#1a1a1a;letter-spacing:-0.01px">CW quantity</span>
<span class="t" style="left:555.1px;top:262.8px;color:#1a1a1a;letter-spacing:-0.07px">CW unit</span>
<span class="t" style="left:622.4px;top:262.8px;color:#1a1a1a;letter-spacing:0.09px">Quantity</span>
<span class="t" style="left:680.3px;top:262.8px;color:#1a1a1a;letter-spacing:-0.17px">Unit</span>
<span class="t" style="left:726.3px;top:262.8px;color:#1a1a1a;letter-spacing:-0.16px">CW deliver now</span>
<span class="t" style="left:827.5px;top:262.8px;color:#1a1a1a;letter-spacing:0.01px">Adjusted unit price</span>
<span class="t" style="left:939.2px;top:262.8px;color:#1a1a1a;letter-spacing:-0.73px">Site</span>
<span class="t" style="left:976.3px;top:262.8px;color:#1a1a1a;letter-spacing:-0.29px">Warehouse</span>
<span class="t" style="left:1083.2px;top:262.8px;color:#1a1a1a;letter-spacing:-0.02px">Unit price</span>
<span class="t" style="left:1176.6px;top:262.8px;color:#1a1a1a;letter-spacing:-0.18px">Discount</span>
<span class="t" style="left:1265.3px;top:262.8px;color:#1a1a1a;letter-spacing:-0.07px">Discount percent</span>
<span class="t" style="left:198.1px;top:281.8px;color:#1a1a1a;letter-spacing:-1.00px">1000</span>
<span class="t" style="left:285.0px;top:281.8px;color:#1a1a1a;letter-spacing:-0.35px">Surface Pro 1...</span>
<span class="t" style="left:647.4px;top:281.8px;color:#1a1a1a;letter-spacing:-1.00px">1.00</span>
<span class="t" style="left:680.3px;top:281.8px;color:#1a1a1a;letter-spacing:-1.00px">ea</span>
<span class="t" style="left:888.5px;top:281.8px;color:#1a1a1a;letter-spacing:-0.92px">0.00000</span>
<span class="t" style="left:939.7px;top:281.8px;color:#1a1a1a;letter-spacing:-1.00px">1</span>
<span class="t" style="left:976.8px;top:281.8px;color:#1a1a1a;letter-spacing:-1.00px">11</span>
<span class="t" style="left:1091.9px;top:281.8px;color:#1a1a1a;letter-spacing:-0.71px">1,250.00</span>
</div>
<div id="dlg"></div><div id="dlgedge"></div><div id="dlgwhite"></div><div id="dlggray"></div>
<div id="dlgclose"></div>
<div class="btn" id="yes"></div><div class="btn" id="no"></div>
<svg id="dico" width="441" height="172" viewBox="578 371 441 172" style="left:578px;top:371px">
<circle cx="627.100" cy="443.900" r="15.200" fill="#1b74cd"/>
<path d="M622.600 438.300c.2-2.600 2.300-3.900 4.800-3.900 2.800 0 4.700 1.500 4.700 3.900 0 2-1.200 3.100-2.700 4.400-1.500 1.300-2.100 2.200-2.100 4.300" fill="none" stroke="#fff" stroke-width="2.700"/>
<circle cx="626.500" cy="453" r="2.300" fill="#fff"/>
<path d="M992.600 378.300l7.600 7.400M1000.200 378.300l-7.600 7.400" stroke="#2b5668" stroke-width="2.400"/>
</svg>

<div id="dtexts">
<span class="t" style="left:742.0px;top:377.8px;font-size:15px;line-height:18px;color:#1a1a1a;letter-spacing:0.21px">Confirm deletion</span>
<span class="t" style="left:651.0px;top:437.2px;color:#000;letter-spacing:-0.13px">You are about to delete a record in Order lines. Delete record?</span>
<span class="t" style="left:854.1px;top:503.6px;color:#000;letter-spacing:-0.74px">Yes</span>
<span class="t" style="left:953.2px;top:503.6px;color:#000;letter-spacing:-0.37px">No</span>
</div>
</body></html>
